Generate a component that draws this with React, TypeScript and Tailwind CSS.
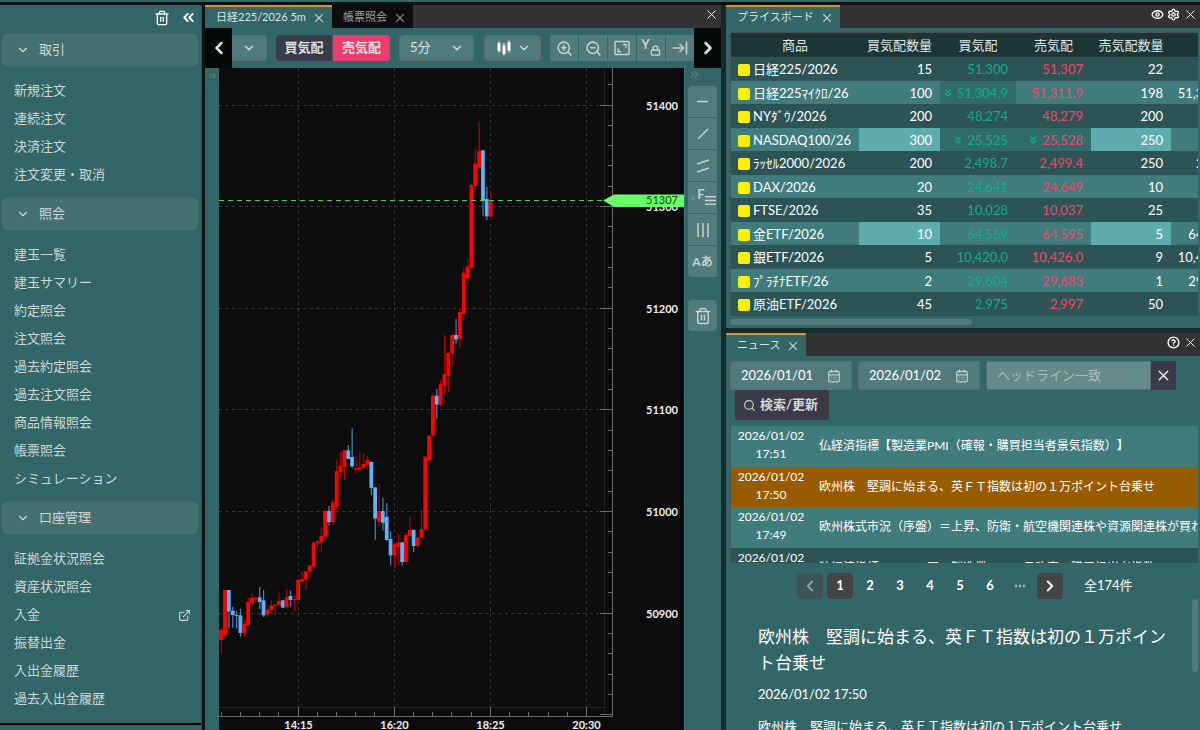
import React, { useState } from 'react';
import {
  CalendarDays,
  ChevronDown,
  ChevronLeft,
  ChevronRight,
  ChevronsDown,
  ChevronsLeft,
  ChevronsRight,
  CircleHelp,
  Ellipsis,
  ExternalLink,
  Eye,
  Lock,
  Minus,
  Search,
  Settings,
  Trash2,
  X,
  ZoomIn,
  ZoomOut,
} from 'lucide-react';

// ============================================================================
// Data
// ============================================================================
const menuSections = [
  { title: '取引', items: ['新規注文', '連続注文', '決済注文', '注文変更・取消'] },
  {
    title: '照会',
    items: [
      '建玉一覧',
      '建玉サマリー',
      '約定照会',
      '注文照会',
      '過去約定照会',
      '過去注文照会',
      '商品情報照会',
      '帳票照会',
      'シミュレーション',
    ],
  },
  {
    title: '口座管理',
    items: ['証拠金状況照会', '資産状況照会', '入金', '振替出金', '入出金履歴', '過去入出金履歴'],
  },
];

interface PriceRow {
  name: string;
  bidQty: string;
  bid: string;
  ask: string;
  askQty: string;
  last?: string;
  flash?: boolean; // quantity cells highlighted
  bidMoved?: boolean;
  askMoved?: boolean;
}

const priceRows: PriceRow[] = [
  { name: '日経225/2026', bidQty: '15', bid: '51,300', ask: '51,307', askQty: '22' },
  { name: '日経225ﾏｲｸﾛ/26', bidQty: '100', bid: '51,304.9', ask: '51,311.9', askQty: '198', last: '51,304.9', bidMoved: true },
  { name: 'NYﾀﾞｳ/2026', bidQty: '200', bid: '48,274', ask: '48,279', askQty: '200' },
  { name: 'NASDAQ100/26', bidQty: '300', bid: '25,525', ask: '25,528', askQty: '250', flash: true, bidMoved: true, askMoved: true },
  { name: 'ﾗｯｾﾙ2000/2026', bidQty: '200', bid: '2,498.7', ask: '2,499.4', askQty: '250', last: '2,499' },
  { name: 'DAX/2026', bidQty: '20', bid: '24,641', ask: '24,649', askQty: '10' },
  { name: 'FTSE/2026', bidQty: '35', bid: '10,028', ask: '10,037', askQty: '25' },
  { name: '金ETF/2026', bidQty: '10', bid: '64,569', ask: '64,595', askQty: '5', last: '64,595', flash: true },
  { name: '銀ETF/2026', bidQty: '5', bid: '10,420.0', ask: '10,426.0', askQty: '9', last: '10,426.0' },
  { name: 'ﾌﾟﾗﾁﾅETF/26', bidQty: '2', bid: '29,604', ask: '29,683', askQty: '1', last: '29,604' },
  { name: '原油ETF/2026', bidQty: '45', bid: '2,975', ask: '2,997', askQty: '50' },
];

const news = [
  { time: '17:51', title: '仏経済指標【製造業PMI（確報・購買担当者景気指数）】' },
  { time: '17:50', title: '欧州株　堅調に始まる、英ＦＴ指数は初の１万ポイント台乗せ' },
  { time: '17:49', title: '欧州株式市況（序盤）＝上昇、防衛・航空機関連株や資源関連株が買われる' },
  { time: '17:48', title: '独経済指標　ユーロ圏の製造業、１２月改定の購買担当者指数' },
];

// [high, body top, body bottom, low, rising] in thirds of a pixel, from the 51111 level down
type Candle = [number, number, number, number, 0 | 1];

const candles: Candle[] = [
  [687, 687, 725, 725, 0],
  [682, 690, 720, 760, 1], [570, 570, 705, 712, 1], [570, 570, 634, 686, 0], [620, 632, 645, 683, 0],
  [633, 645, 648, 686, 0], [626, 646, 699, 710, 0], [660, 671, 699, 710, 1], [593, 606, 675, 675, 1],
  [580, 594, 609, 616, 1], [590, 594, 597, 607, 1], [561, 592, 606, 627, 0], [571, 601, 646, 651, 0],
  [625, 629, 643, 651, 1], [602, 617, 630, 642, 1], [611, 614, 618, 647, 1], [578, 603, 615, 615, 1],
  [600, 601, 623, 624, 0], [568, 592, 620, 622, 1], [571, 588, 600, 620, 0], [585, 597, 600, 633, 1],
  [538, 540, 600, 600, 1], [513, 537, 543, 546, 1], [512, 514, 539, 570, 1], [495, 497, 515, 535, 1],
  [426, 428, 500, 502, 1], [419, 424, 429, 446, 1], [382, 408, 427, 456, 1], [327, 333, 410, 412, 1],
  [318, 333, 366, 377, 0], [299, 307, 366, 375, 1], [180, 213, 319, 329, 1], [156, 198, 216, 231, 1],
  [150, 151, 200, 239, 1], [135, 151, 177, 177, 0], [85, 171, 199, 203, 0], [171, 204, 207, 221, 1],
  [156, 203, 207, 207, 1], [160, 192, 204, 204, 1], [168, 180, 194, 209, 1], [184, 186, 264, 285, 0],
  [261, 262, 356, 420, 0], [253, 333, 365, 380, 1], [293, 333, 368, 392, 0], [309, 350, 420, 422, 0],
  [394, 417, 466, 496, 0], [428, 432, 466, 504, 1], [400, 427, 441, 496, 1], [427, 427, 486, 496, 0],
  [398, 405, 486, 486, 1], [350, 390, 408, 408, 1], [388, 390, 438, 456, 0], [411, 411, 438, 447, 1],
  [329, 387, 411, 411, 1], [168, 170, 388, 390, 1], [105, 107, 180, 186, 1], [-20, -13, 105, 110, 1],
  [-34, -13, 14, 56, 0], [-60, -49, 14, 19, 1], [-195, -77, -43, -18, 1], [-143, -141, -72, -24, 1],
  [-200, -195, -139, -103, 1], [-243, -195, -181, -169, 0], [-274, -264, -184, -157, 1],
  [-397, -382, -258, -240, 1], [-424, -401, -365, -344, 1], [-650, -645, -398, -393, 1],
  [-755, -709, -642, -624, 1], [-836, -748, -697, -697, 1], [-749, -749, -600, -553, 0],
  [-639, -603, -551, -540, 0], [-625, -598, -550, -550, 1],
];

const priceLevels = [51400, 51300, 51200, 51100, 51000, 50900];
const timeLabels = ['14:15', '16:20', '18:25', '20:30'];

const priceY = (price: number) => Math.floor(38 + (51400 - price) * 1.0165) - 0.5;
const timeX = (i: number) => Math.floor(79 + i * 96.2) + 0.5;

// ============================================================================
// Small shared parts
// ============================================================================
const Glyph: React.FC<{ children: React.ReactNode; size?: number; className?: string }> = ({
  children,
  size = 18,
  className = '',
}) => (
  <svg
    width={size}
    height={size}
    viewBox="0 0 18 18"
    fill="none"
    stroke="currentColor"
    strokeWidth={1.5}
    className={className}
    aria-hidden="true"
  >
    {children}
  </svg>
);

const Tab: React.FC<{ label: string; active?: boolean }> = ({ label, active = false }) => (
  <div
    className={`flex h-full items-center gap-1.5 border-t-2 pr-1.5 pl-[11px] text-[11px] ${
      active ? 'border-[#ee9011] bg-[#336666] text-[#dce5e4]' : 'border-[#0b0b0b] bg-[#0d0d0d] text-[#a0a0a0]'
    }`}
  >
    <span>{label}</span>
    <button type="button" aria-label={`${label}を閉じる`}>
      <X size={14} strokeWidth={2} className={active ? 'text-[#b9cbca]' : 'text-[#858585]'} />
    </button>
  </div>
);

const TabBar: React.FC<{ children: React.ReactNode; actions: React.ReactNode }> = ({ children, actions }) => (
  <div className="flex h-[23px] shrink-0 items-center bg-[#333333]">
    {children}
    <div className="ml-auto flex items-center gap-[3px] pr-0.5 pb-1 text-white">{actions}</div>
  </div>
);

const CloseButton = () => (
  <button type="button" aria-label="閉じる">
    <X size={15} strokeWidth={1.5} />
  </button>
);

// ============================================================================
// Sidebar
// ============================================================================
const Sidebar = () => (
  <nav className="flex w-[202px] shrink-0 flex-col border-r border-[#2b5556] bg-[#336666] text-[13px] text-[#ced8d7]">
    <div className="flex h-[29px] shrink-0 items-center justify-end gap-2.5 pr-1 pb-1 text-white">
      <button type="button" aria-label="削除">
        <Trash2 size={16} strokeWidth={2} />
      </button>
      <button type="button" aria-label="メニューを畳む">
        <ChevronsLeft size={17} strokeWidth={2.5} />
      </button>
    </div>
    <div className="min-h-0 flex-1 overflow-hidden px-0.5">
      {menuSections.map((section) => (
        <section key={section.title}>
          <button type="button" className="flex h-8 w-[196px] items-center gap-[9px] rounded bg-[#457070] px-3.5 text-left">
            <ChevronDown size={14} strokeWidth={2} />
            <span>{section.title}</span>
          </button>
          <ul className="pt-[11px] pb-[9px]">
            {section.items.map((item) => (
              <li key={item}>
                <a href="#" className="flex h-7 items-center justify-between pr-1.5 pl-3">
                  {item}
                  {item === '入金' && <ExternalLink size={13} strokeWidth={2} className="mr-0.5" />}
                </a>
              </li>
            ))}
          </ul>
        </section>
      ))}
    </div>
    <div className="h-[7px] shrink-0 border-t-2 border-black" />
  </nav>
);

// ============================================================================
// Chart
// ============================================================================
const ChartToolbar: React.FC = () => {
  const [side, setSide] = useState<'bid' | 'ask'>('ask');

  return (
    <div className="flex h-10 shrink-0 items-center text-[13px] text-[#dbe4e3]">
      <button type="button" aria-label="前へ" className="flex h-10 w-[27px] shrink-0 items-center justify-center bg-[#050a0a]">
        <ChevronLeft size={20} strokeWidth={3} />
      </button>
      <button
        type="button"
        aria-label="銘柄"
        className="flex h-[26px] w-[35px] shrink-0 items-center justify-center rounded-r-sm border border-l-0 border-[#5f6c6c] bg-[#527c7b]"
      >
        <ChevronDown size={14} strokeWidth={2} />
      </button>
      <div className="ml-[9px] flex h-[26px] shrink-0 overflow-hidden rounded-sm font-bold">
        <button
          type="button"
          onClick={() => setSide('bid')}
          className={`w-[57px] border-r border-[#555] ${side === 'bid' ? 'bg-[#ea3d6d]' : 'bg-[#3b3b47]'}`}
        >
          買気配
        </button>
        <button
          type="button"
          onClick={() => setSide('ask')}
          className={`w-[57px] ${side === 'ask' ? 'bg-[#ea3d6d]' : 'bg-[#3b3b47]'}`}
        >
          売気配
        </button>
      </div>
      <div className="relative ml-[9px] h-[26px] w-[75px] shrink-0">
        <select
          aria-label="足種"
          className="h-full w-full appearance-none rounded-sm border border-[#5f6c6c] bg-[#527c7b] pl-2.5 text-[13px]"
        >
          <option>5分</option>
          <option>15分</option>
          <option>60分</option>
        </select>
        <ChevronDown size={14} strokeWidth={2} className="pointer-events-none absolute top-1.5 right-2.5" />
      </div>
      <button
        type="button"
        aria-label="チャート種別"
        className="ml-2.5 flex h-[26px] w-[57px] shrink-0 items-center justify-center gap-1 rounded-sm border border-[#5f6c6c] bg-[#527c7b]"
      >
        <Glyph className="text-white">
          <path d="M4 2.5v11M9 4v12.5M14 1.5v12" strokeWidth={1} />
          <path d="M4 4v8M9 6.500v8.500M14 3v8.500" strokeWidth={3} />
        </Glyph>
        <ChevronDown size={14} strokeWidth={2} />
      </button>
      <div className="ml-[9px] flex h-[26px] min-w-0 flex-1 gap-px overflow-hidden rounded-l-sm text-[#c4d2d1]">
        <button type="button" aria-label="拡大" className="flex w-7 shrink-0 items-center justify-center bg-[#527c7b]">
          <ZoomIn size={17} strokeWidth={2.25} />
        </button>
        <button type="button" aria-label="縮小" className="flex w-7 shrink-0 items-center justify-center bg-[#527c7b]">
          <ZoomOut size={17} strokeWidth={2.25} />
        </button>
        <button type="button" aria-label="全体表示" className="flex w-7 shrink-0 items-center justify-center bg-[#527c7b]">
          <Glyph>
            <rect x="2" y="2.5" width="14" height="13" rx="1" />
            <path d="M10 5.500h3v3M8 12.500H5v-3" />
          </Glyph>
        </button>
        <button type="button" aria-label="Y軸固定" className="flex w-7 shrink-0 items-center justify-center bg-[#527c7b] text-[13px] font-bold">
          <span className="pb-1.5">Y</span>
          <Lock size={11} strokeWidth={3} className="mt-1" />
        </button>
        <button type="button" aria-label="最新へ" className="flex w-7 flex-1 items-center justify-center bg-[#527c7b]">
          <Glyph>
            <path d="M1.500 9h11M8.500 5l4 4-4 4M15.500 2.500v13" />
          </Glyph>
        </button>
      </div>
      <button type="button" aria-label="次へ" className="flex h-10 w-[27px] shrink-0 items-center justify-center bg-[#050a0a]">
        <ChevronRight size={20} strokeWidth={3} />
      </button>
    </div>
  );
};

const CandleChart = () => (
  <svg width={465} height={662} className="block" role="img" aria-label="日経225/2026 5分足">
    {/* Grid */}
    <g stroke="#383838" strokeDasharray="3 3.5">
      {priceLevels.map((p) => (
        <line key={p} x1={0} x2={385} y1={priceY(p)} y2={priceY(p)} />
      ))}
      {timeLabels.map((t, i) => (
        <line key={t} x1={timeX(i)} x2={timeX(i)} y1={0} y2={639} />
      ))}
    </g>

    {/* Axes */}
    <g stroke="#242424">
      <line x1={385.5} x2={385.5} y1={0} y2={648} />
      <line x1={0} x2={385} y1={639.5} y2={639.5} />
    </g>
    <g stroke="#6a6a6a">
      <line x1={393.5} x2={393.5} y1={0} y2={648} />
      <line x1={0} x2={394} y1={648.5} y2={648.5} />
      {Array.from({ length: 32 }, (_, i) => 51420 - i * 20).map((p) => (
        <line key={p} x1={p % 100 === 0 ? 381 : 389} x2={393} y1={priceY(p)} y2={priceY(p)} />
      ))}
      {Array.from({ length: 20 }, (_, i) => i - 4).map((n) => {
        const x = Math.floor(79 + n * 19.24) + 0.5;
        return <line key={n} x1={x} x2={x} y1={n % 5 === 0 ? 639 : 644} y2={648} />;
      })}
    </g>

    {/* Candles */}
    {candles.map(([high, top, bottom, low, rising], i) => {
      const x = 2.15 + (i - 1) * 3.85;
      const y = (v: number) => 332 + v / 3;
      return (
        <g key={i}>
          <rect x={x - 0.5} y={y(high)} width={1.2} height={y(low) - y(high)} fill={rising ? '#b30000' : '#4584bd'} />
          <rect x={x - 1.9} y={y(top)} width={3.8} height={y(bottom) - y(top)} fill={rising ? '#ff0000' : '#5fb2f7'} />
        </g>
      );
    })}

    {/* Labels */}
    <g fill="#f0f0f0" fontSize={11} fontWeight={700} textAnchor="end">
      {priceLevels.map((p) => (
        <text key={p} x={459} y={priceY(p) + 4}>
          {p}
        </text>
      ))}
    </g>
    <g fill="#f0f0f0" fontSize={11} fontWeight={700} textAnchor="middle">
      {timeLabels.map((t, i) => (
        <text key={t} x={timeX(i)} y={661}>
          {t}
        </text>
      ))}
    </g>

    {/* Current price */}
    <line x1={0} x2={385} y1={132.5} y2={132.5} stroke="#4fce4f" strokeDasharray="5 4" />
    <path d="M384 132.500L395 126.500H465V139H395Z" fill="#66ff66" />
    <text x={459} y={136} fontSize={11} textAnchor="end" fill="#1d451d">
      51307
    </text>
  </svg>
);

const toolButton = 'flex h-[31px] w-[29px] items-center justify-center bg-[#527c7b] text-[#c4d2d1]';

const DrawingTools = () => (
  <div className="flex w-[37px] shrink-0 flex-col border-l border-[#417878] px-[3px]">
    <button type="button" aria-label="ツールを畳む" className="flex h-[18px] items-start text-[#7d8f8f]">
      <ChevronsRight size={13} strokeWidth={1.75} />
    </button>
    <div className="flex flex-col gap-px overflow-hidden rounded-sm">
      <button type="button" aria-label="水平線" className={toolButton}>
        <Minus size={17} strokeWidth={2} />
      </button>
      <button type="button" aria-label="トレンドライン" className={toolButton}>
        <Glyph>
          <path d="M4 14L14 4" />
        </Glyph>
      </button>
      <button type="button" aria-label="平行線" className={toolButton}>
        <Glyph>
          <path d="M3 7l12-4M3 15l12-4" />
        </Glyph>
      </button>
      <button type="button" aria-label="フィボナッチ" className={`${toolButton} text-[13px] font-bold`}>
        <ChevronLeft size={8} strokeWidth={3} className="text-[#92aaa9]" />
        <span className="pb-1.5">F</span>
        <Glyph size={11} className="mt-1.5">
          <path d="M0 3h18M0 9h18M0 15h18" strokeWidth={2.5} />
        </Glyph>
      </button>
      <button type="button" aria-label="垂直線" className={toolButton}>
        <Glyph>
          <path d="M4 2v14M9 2v14M14 2v14" />
        </Glyph>
      </button>
      <button type="button" aria-label="テキスト" className={`${toolButton} text-[12px] font-bold`}>
        Aあ
      </button>
    </div>
    <button type="button" aria-label="描画を削除" className={`${toolButton} mt-[23px] rounded-sm`}>
      <Trash2 size={18} strokeWidth={2} />
    </button>
  </div>
);

const ChartPanel = () => (
  <section className="flex w-[516px] shrink-0 flex-col bg-[#336666]">
    <TabBar actions={<CloseButton />}>
      <Tab label="日経225/2026 5m" active />
      <Tab label="帳票照会" />
    </TabBar>
    <ChartToolbar />
    <div className="flex min-h-0 flex-1">
      <div className="w-3.5 shrink-0">
        <button
          type="button"
          aria-label="パネルを開く"
          className="flex h-3.5 w-full items-center justify-center border border-[#505f5f] text-[#7d8f8f]"
        >
          <ChevronsRight size={11} strokeWidth={1.75} />
        </button>
      </div>
      <div className="min-w-0 flex-1 overflow-hidden bg-[#0c0c0c]">
        <CandleChart />
      </div>
      <DrawingTools />
    </div>
  </section>
);

// ============================================================================
// Price board
// ============================================================================
const PriceBoard = () => (
  <section className="flex h-[323px] shrink-0 flex-col bg-[#336666]">
    <TabBar
      actions={
        <>
          <button type="button" aria-label="表示">
            <Eye size={13} strokeWidth={2.5} />
          </button>
          <button type="button" aria-label="設定">
            <Settings size={13} strokeWidth={2.5} />
          </button>
          <CloseButton />
        </>
      }
    >
      <Tab label="プライスボード" active />
    </TabBar>
    <div className="mt-1 mr-0.5 ml-1 overflow-hidden border-t border-l border-[#4c5557]">
      <table className="w-[506px] table-fixed text-right text-[13px] leading-4 text-white">
        <colgroup>
          <col className="w-[128px]" />
          <col className="w-[81px]" />
          <col className="w-[76px]" />
          <col className="w-[75px]" />
          <col className="w-[80px]" />
          <col className="w-[66px]" />
        </colgroup>
        <thead className="bg-[#1c3535] text-center text-[#dfe5e5]">
          <tr className="h-6">
            {['商品', '買気配数量', '買気配', '売気配', '売気配数量', ''].map((h) => (
              <th key={h} className="p-0 font-normal">
                {h}
              </th>
            ))}
          </tr>
        </thead>
        <tbody>
          {priceRows.map((row) => (
            <tr key={row.name} className="odd:h-6 odd:bg-[#2c5454] even:h-[23px] even:bg-[#407c7c]">
              <td className="p-0 pl-[7px] text-left whitespace-nowrap">
                <span className="mr-[3px] inline-block size-3 rounded-xs bg-[#fff000] align-[-2px]" />
                {row.name}
              </td>
              <td className={`p-0 pr-2 ${row.flash ? 'bg-[#5eadae]' : ''}`}>{row.bidQty}</td>
              <td className={`p-0 pr-2 text-[#12ab94] ${row.bidMoved ? 'bg-[#306c6a]' : ''}`}>
                {row.bidMoved && <ChevronsDown size={12} strokeWidth={2.5} className="mr-[3px] inline align-[-1px]" />}
                {row.bid}
              </td>
              <td className={`p-0 pr-2 text-[#ee4a6b] ${row.askMoved ? 'bg-[#306c6a]' : ''}`}>
                {row.askMoved && (
                  <ChevronsDown size={12} strokeWidth={2.5} className="mr-[3px] inline align-[-1px] text-[#12ab94]" />
                )}
                {row.ask}
              </td>
              <td className={`p-0 pr-2 ${row.flash ? 'bg-[#5eadae]' : ''}`}>{row.askQty}</td>
              <td className="p-0 pr-2">{row.last}</td>
            </tr>
          ))}
        </tbody>
      </table>
    </div>
    <div className="mt-[3px] ml-1 h-1.5 w-[51%] rounded-full bg-[#527c7b]" />
  </section>
);

// ============================================================================
// News
// ============================================================================
const DateField: React.FC<{ id: string; label: string; value: string }> = ({ id, label, value }) => (
  <div className="flex h-[29px] w-[122px] items-center rounded-xs border border-[#5f6c6c] bg-[#527c7b] px-2.5">
    <input id={id} aria-label={label} defaultValue={value} className="w-full min-w-0 flex-1 text-[13px] text-white" />
    <CalendarDays size={14} strokeWidth={2} className="text-[#c4d2d1]" />
  </div>
);

const NewsPanel: React.FC = () => {
  const [selected, setSelected] = useState('17:50');
  const [page, setPage] = useState(1);

  return (
    <section className="flex min-h-0 flex-1 flex-col bg-[#336666] text-white">
      <TabBar
        actions={
          <>
            <button type="button" aria-label="ヘルプ">
              <CircleHelp size={13} strokeWidth={2.5} />
            </button>
            <CloseButton />
          </>
        }
      >
        <Tab label="ニュース" active />
      </TabBar>

      <form className="px-1 pt-[5px]" onSubmit={(e) => e.preventDefault()}>
        <div className="flex gap-1.5">
          <DateField id="from" label="開始日" value="2026/01/01" />
          <DateField id="to" label="終了日" value="2026/01/02" />
          <div className="flex h-[29px]">
            <input
              aria-label="ヘッドライン一致"
              placeholder="ヘッドライン一致"
              className="w-[165px] rounded-l-xs border border-[#5f6c6c] bg-[#648b8a] px-2.5 text-[13px] placeholder:text-[#a9bebd]"
            />
            <button type="button" aria-label="クリア" className="flex w-[25px] items-center justify-center rounded-r-xs bg-[#3b3b47]">
              <X size={17} strokeWidth={1.75} />
            </button>
          </div>
        </div>
        <button
          type="submit"
          className="ml-[5px] flex h-[30px] items-center gap-1 rounded-xs bg-[#3b3b47] px-2 pr-[11px] text-[13px] font-bold text-[#d4d7d8]"
        >
          <Search size={13} strokeWidth={2} />
          検索/更新
        </button>
      </form>

      <div className="mt-1.5 mr-0.5 ml-1 h-[137px] shrink-0 overflow-hidden border-l border-[#4c5557]">
        <table className="h-[162px] w-full table-fixed text-[12px] leading-[18px]">
          <tbody>
            {news.map((n) => (
              <tr
                key={n.time}
                onClick={() => setSelected(n.time)}
                className={n.time === selected ? 'bg-[#985b00]' : 'odd:bg-[#407c7c] even:bg-[#2c5454]'}
              >
                <td className="w-20 px-1.5 pt-0 pb-0.5 text-center">
                  2026/01/02
                  <br />
                  {n.time}
                </td>
                <td className="overflow-hidden py-0 pl-2 whitespace-nowrap">{n.title}</td>
              </tr>
            ))}
          </tbody>
        </table>
      </div>

      <div className="mt-2.5 ml-[71px] flex h-[26px] shrink-0 items-center gap-1 text-[13px]">
        <button type="button" aria-label="前のページ" disabled className="flex size-[26px] items-center justify-center rounded bg-[#3d5655] text-[#8fa3a2]">
          <ChevronLeft size={18} strokeWidth={2.5} />
        </button>
        {[1, 2, 3, 4, 5, 6].map((n) => (
          <button
            key={n}
            type="button"
            onClick={() => setPage(n)}
            className={`size-[26px] rounded font-bold ${n === page ? 'bg-[#434343]' : ''}`}
          >
            {n}
          </button>
        ))}
        <span className="flex w-[26px] justify-center text-[#9db1b0]">
          <Ellipsis size={14} strokeWidth={3} />
        </span>
        <button type="button" aria-label="次のページ" className="flex size-[26px] items-center justify-center rounded bg-[#434343]">
          <ChevronRight size={18} strokeWidth={2.5} />
        </button>
        <span className="ml-[17px]">全174件</span>
      </div>

      <div className="flex min-h-0 flex-1 overflow-hidden">
        <article className="flex-1 pt-[25px] pr-6 pl-8 text-[13px]">
          <h2 className="text-[17px] leading-[26px]">欧州株　堅調に始まる、英ＦＴ指数は初の１万ポイント台乗せ</h2>
          <p className="mt-1.5 leading-6">2026/01/02 17:50</p>
          <p className="mt-2 leading-6">欧州株　堅調に始まる、英ＦＴ指数は初の１万ポイント台乗せ</p>
        </article>
        <div className="mr-0.5 h-[73px] w-1.5 shrink-0 rounded-full bg-[#527c7b]" />
      </div>
    </section>
  );
};

// ============================================================================
export default function App() {
  return (
    <div className="flex h-screen flex-col overflow-hidden bg-[#0f1213] [font-family:Lato,'Noto_Sans_CJK_JP',sans-serif] [text-spacing-trim:space-all]">
      <div className="mb-[3px] h-0.5 shrink-0 bg-[#336666]" />
      <div className="flex min-h-0 flex-1">
        <Sidebar />
        <main className="ml-[3px] flex min-w-0 flex-1 gap-[5px] bg-[#152a2b]">
          <ChartPanel />
          <div className="flex min-w-0 flex-1 flex-col gap-[5px]">
            <PriceBoard />
            <NewsPanel />
          </div>
        </main>
      </div>
    </div>
  );
}
